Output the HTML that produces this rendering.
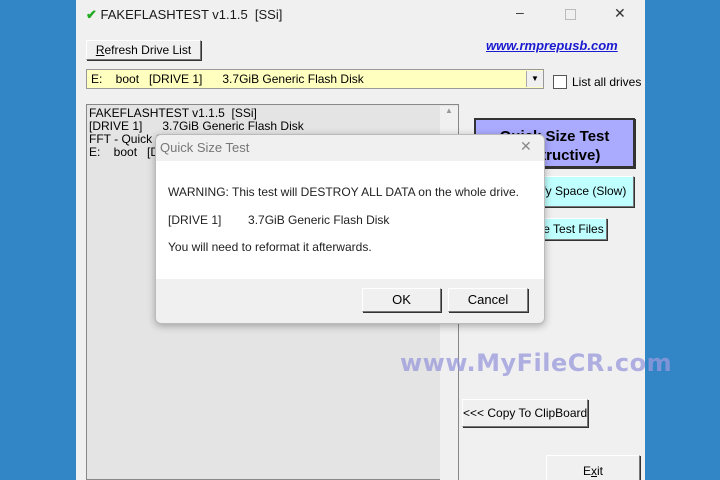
<!DOCTYPE html>
<html><head><style>
html,body{margin:0;width:720px;height:480px;overflow:hidden}
body{background:#3386c5;font-family:"Liberation Sans",Arial,sans-serif;position:relative}
.a{position:absolute}
.win{left:76px;top:0;width:569px;height:480px;background:#f0f0f0}
.btn{position:absolute;background:#f0f0f0;border:1px solid #fff;border-right-color:#777;border-bottom-color:#777;box-shadow:1px 1px 0 #333;font-size:12px;text-align:center;box-sizing:border-box;white-space:nowrap;overflow:hidden}
</style></head><body>
<div class="a win"></div>
<div class="a" style="left:86px;top:7px;font-size:13px;color:#1a1a1a"><span style="color:#2a2;font-weight:bold">✔</span> FAKEFLASHTEST v1.1.5&nbsp; [SSi]</div>
<div class="a" style="left:516px;top:4px;font-size:14px;color:#333">–</div>
<div class="a" style="left:565px;top:9px;width:9px;height:9px;border:1px solid #bbb"></div>
<div class="a" style="left:614px;top:5px;font-size:14px;color:#333">✕</div>
<div class="btn" style="left:86px;top:40px;width:115px;height:20px;line-height:18px"><u>R</u>efresh Drive List</div>
<div class="a" style="left:486px;top:38px;font-size:13px;font-weight:bold;font-style:italic;color:#1a1ad0;text-decoration:underline">www.rmprepusb.com</div>
<div class="a" style="left:86px;top:69px;width:458px;height:20px;background:#ffffc0;border:1px solid #999;box-sizing:border-box;font-size:12px;line-height:18px;padding-left:4px;white-space:pre">E:    boot   [DRIVE 1]      3.7GiB Generic Flash Disk</div>
<div class="a" style="left:526px;top:71px;width:16px;height:16px;background:#f0f0f0;border-left:1px solid #aaa;font-size:8px;text-align:center;line-height:16px">▼</div>
<div class="a" style="left:553px;top:75px;width:12px;height:12px;border:1px solid #555;background:#fff"></div>
<div class="a" style="left:572px;top:75px;font-size:12px">List all drives</div>
<div class="a" style="left:86px;top:104px;width:373px;height:376px;background:#e4e4e4;border:1px solid #888;box-sizing:border-box;font-size:12px;line-height:13px;padding:2px;white-space:pre">FAKEFLASHTEST v1.1.5  [SSi]
[DRIVE 1]      3.7GiB Generic Flash Disk
FFT - Quick S
E:    boot   [D</div>
<div class="a" style="left:440px;top:106px;width:18px;height:374px;background:#f0f0f0;font-size:8px;color:#999;text-align:center">▲</div>
<div class="btn" style="left:474px;top:118px;width:161px;height:50px;background:#aaaaff;border:2px solid #333;font-weight:bold;font-size:15px;line-height:19px;padding-top:7px;white-space:normal">Quick Size Test<br>(Destructive)</div>
<div class="btn" style="left:474px;top:176px;width:160px;height:31px;background:#c0ffff;line-height:29px;padding-left:40px">Verify Space (Slow)</div>
<div class="btn" style="left:474px;top:218px;width:133px;height:22px;background:#c0ffff;line-height:20px;padding-left:38px">Delete Test Files</div>
<div class="btn" style="left:462px;top:399px;width:126px;height:28px;line-height:26px">&lt;&lt;&lt; Copy To ClipBoard</div>
<div class="btn" style="left:546px;top:455px;width:94px;height:30px;line-height:30px">E<u>x</u>it</div>
<div class="a" style="left:400px;top:349px;font-size:24px;font-weight:bold;color:#9999dd;opacity:.75;letter-spacing:0.5px;font-family:'DejaVu Sans',sans-serif;white-space:nowrap">www.MyFileCR.com</div>
<div class="a" style="left:155px;top:134px;width:388px;height:188px;background:#f0f0f0;border:1px solid #bbb;border-radius:6px;box-shadow:0 2px 8px rgba(0,0,0,.3);overflow:hidden">
<div class="a" style="left:4px;top:5px;font-size:13px;color:#777">Quick Size Test</div>
<div class="a" style="left:364px;top:3px;font-size:14px;color:#888">✕</div>
<div class="a" style="left:0;top:26px;width:388px;height:118px;background:#fff;font-size:12px;color:#222">
<div class="a" style="left:12px;top:24px;white-space:nowrap">WARNING: This test will DESTROY ALL DATA on the whole drive.</div>
<div class="a" style="left:12px;top:52px;white-space:pre">[DRIVE 1]        3.7GiB Generic Flash Disk</div>
<div class="a" style="left:12px;top:79px;white-space:nowrap">You will need to reformat it afterwards.</div>
</div>
<div class="btn" style="left:206px;top:153px;width:79px;height:24px;line-height:22px;font-size:13px">OK</div>
<div class="btn" style="left:292px;top:153px;width:80px;height:24px;line-height:22px;font-size:13px">Cancel</div>
</div>
</body></html>
